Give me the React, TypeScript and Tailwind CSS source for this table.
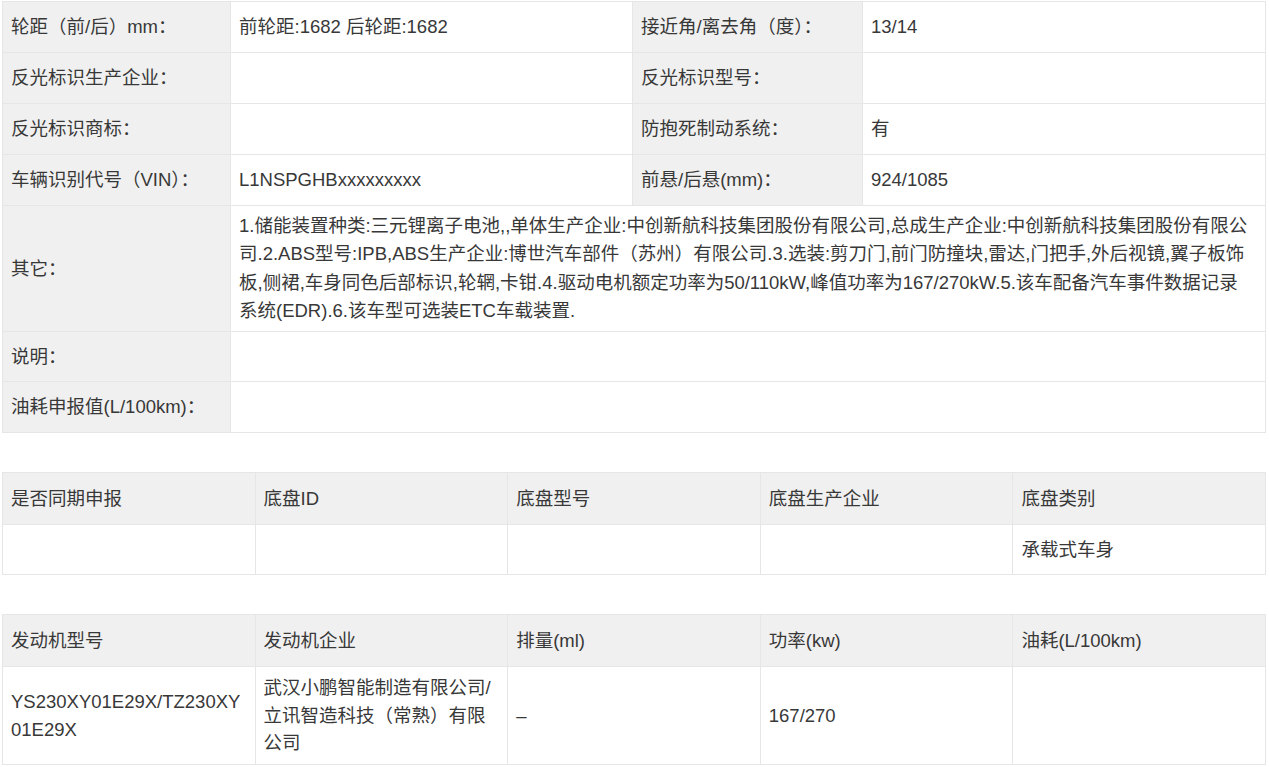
import React from "react";

const font = "font-['Liberation_Sans','Noto_Sans_CJK_SC',sans-serif]";
const cell = "border border-[#e6e6e6] px-2 align-middle";
const lbl = `${cell} bg-[#f0f0f0]`;
const val = `${cell} bg-white`;

function KV({ a, b, c, d }: { a: string; b: string; c: string; d: string }) {
  return (
    <tr className="h-[51px]">
      <td className={lbl}>{a}</td>
      <td className={val}>{b}</td>
      <td className={lbl}>{c}</td>
      <td className={val}>{d}</td>
    </tr>
  );
}

export default function App() {
  return (
    <div className={`${font} bg-white text-[#383838] text-[18.5px] w-[1269px] h-[767px] overflow-hidden px-[2px] pt-[1px]`}>
      <table className="w-[1264px] table-fixed border-collapse">
        <colgroup>
          <col className="w-[228px]" />
          <col className="w-[402px]" />
          <col className="w-[230px]" />
          <col />
        </colgroup>
        <tbody>
          <KV a="轮距（前/后）mm：" b="前轮距:1682 后轮距:1682" c="接近角/离去角（度）：" d="13/14" />
          <KV a="反光标识生产企业：" b="" c="反光标识型号：" d="" />
          <KV a="反光标识商标：" b="" c="防抱死制动系统：" d="有" />
          <KV a="车辆识别代号（VIN）：" b="L1NSPGHBxxxxxxxxx" c="前悬/后悬(mm)：" d="924/1085" />
          <tr className="h-[126px]">
            <td className={lbl}>其它：</td>
            <td className={`${val} leading-[28.3px] whitespace-nowrap`} colSpan={3}>
              <div>1.储能装置种类:三元锂离子电池,,单体生产企业:中创新航科技集团股份有限公司,总成生产企业:中创新航科技集团股份有限公</div>
              <div>司.2.ABS型号:IPB,ABS生产企业:博世汽车部件（苏州）有限公司.3.选装:剪刀门,前门防撞块,雷达,门把手,外后视镜,翼子板饰</div>
              <div>板,侧裙,车身同色后部标识,轮辋,卡钳.4.驱动电机额定功率为50/110kW,峰值功率为167/270kW.5.该车配备汽车事件数据记录</div>
              <div>系统(EDR).6.该车型可选装ETC车载装置.</div>
            </td>
          </tr>
          <tr className="h-[50px]">
            <td className={lbl}>说明：</td>
            <td className={val} colSpan={3}></td>
          </tr>
          <tr className="h-[51px]">
            <td className={lbl}>油耗申报值(L/100km)：</td>
            <td className={val} colSpan={3}></td>
          </tr>
        </tbody>
      </table>

      <table className="w-[1264px] table-fixed border-collapse mt-[39px]">
        <tbody>
          <tr className="h-[52px]">
            {["是否同期申报", "底盘ID", "底盘型号", "底盘生产企业", "底盘类别"].map((t) => (
              <td key={t} className={lbl}>{t}</td>
            ))}
          </tr>
          <tr className="h-[50px]">
            <td className={val}></td>
            <td className={val}></td>
            <td className={val}></td>
            <td className={val}></td>
            <td className={val}>承载式车身</td>
          </tr>
        </tbody>
      </table>

      <table className="w-[1264px] table-fixed border-collapse mt-[39px]">
        <tbody>
          <tr className="h-[52px]">
            {["发动机型号", "发动机企业", "排量(ml)", "功率(kw)", "油耗(L/100km)"].map((t) => (
              <td key={t} className={lbl}>{t}</td>
            ))}
          </tr>
          <tr className="h-[98px]">
            <td className={`${val} leading-[27.5px] whitespace-nowrap`}>
              <div>YS230XY01E29X/TZ230XY</div>
              <div>01E29X</div>
            </td>
            <td className={`${val} leading-[27.5px] whitespace-nowrap`}>
              <div>武汉小鹏智能制造有限公司/</div>
              <div>立讯智造科技（常熟）有限</div>
              <div>公司</div>
            </td>
            <td className={val}>–</td>
            <td className={val}>167/270</td>
            <td className={val}></td>
          </tr>
        </tbody>
      </table>
    </div>
  );
}
